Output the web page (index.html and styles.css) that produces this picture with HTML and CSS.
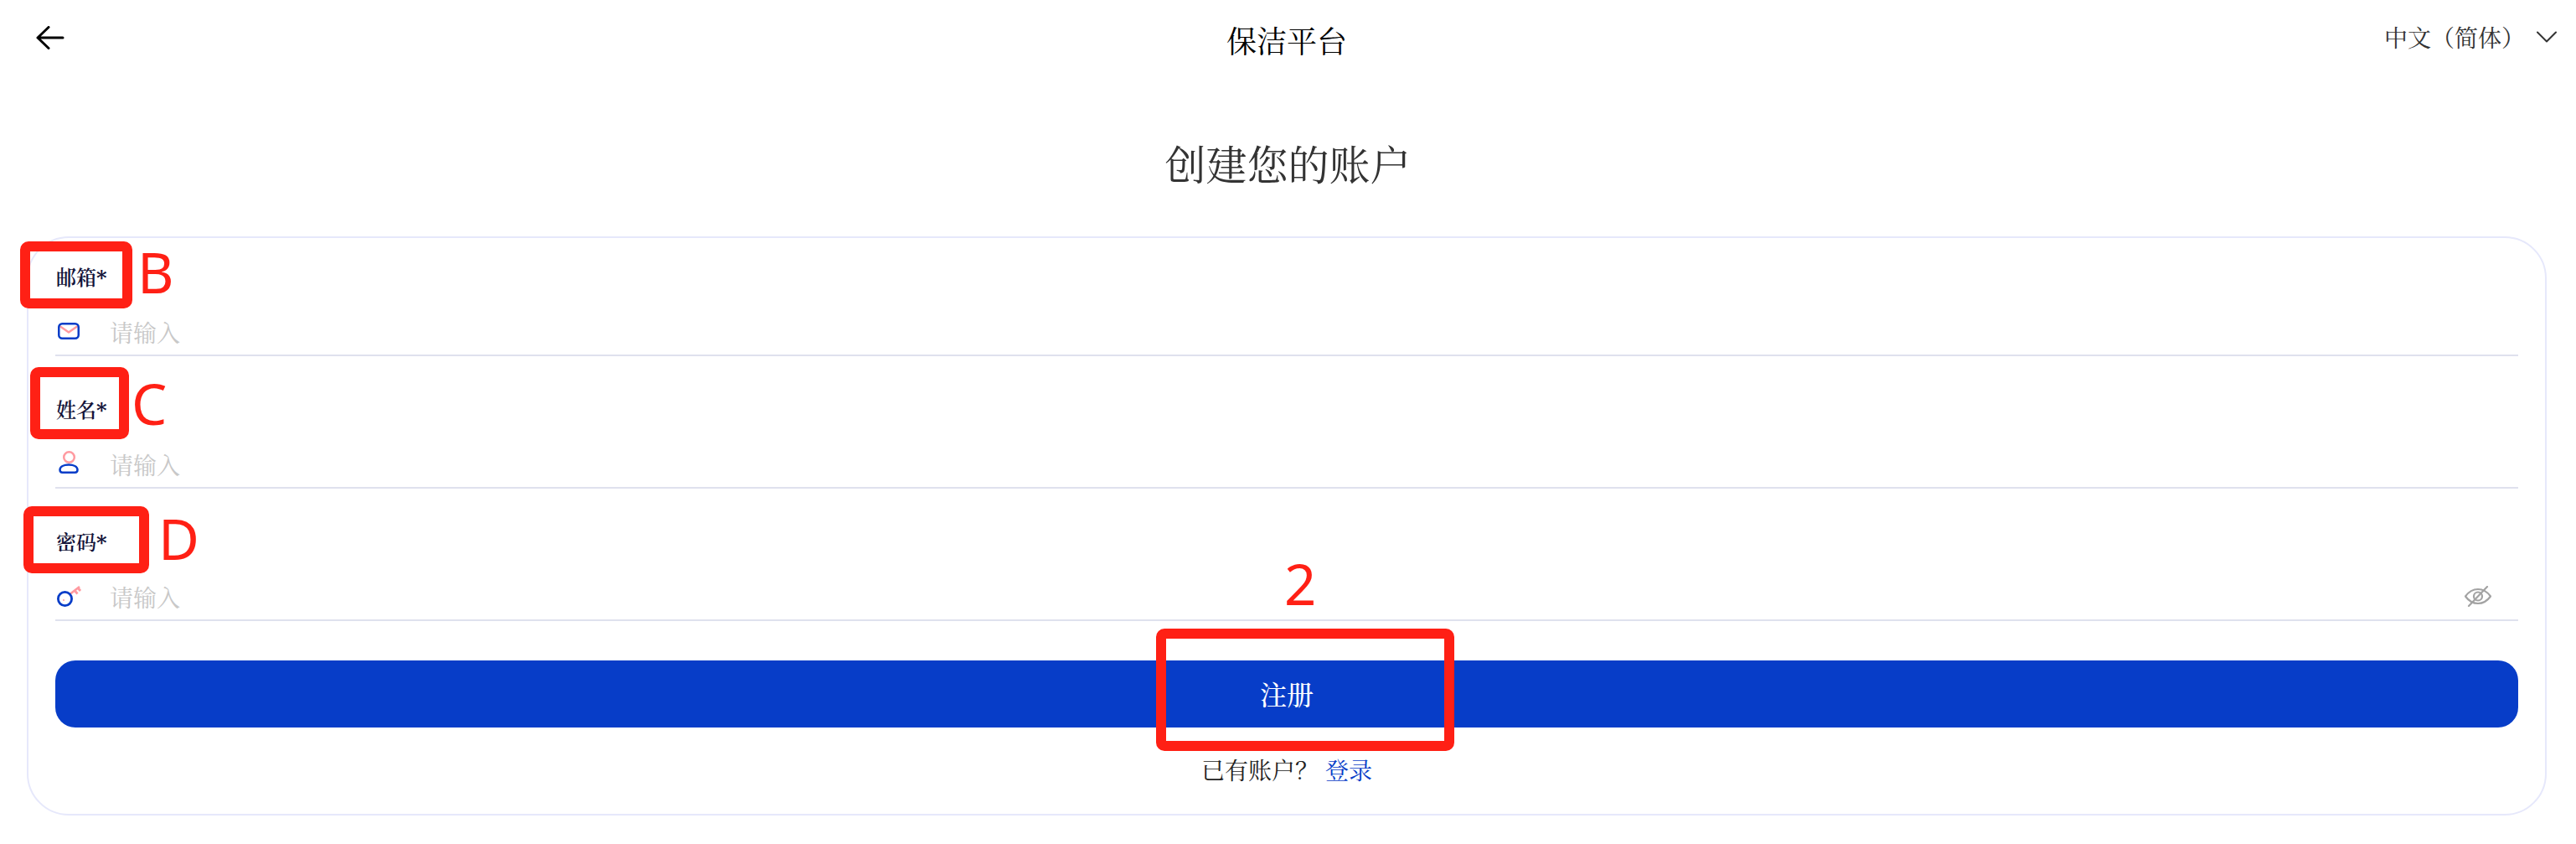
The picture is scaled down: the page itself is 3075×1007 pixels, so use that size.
FILE: index.html
```html
<!DOCTYPE html>
<html lang="zh-CN">
<head>
<meta charset="utf-8">
<title>保洁平台</title>
<link rel="stylesheet" href="styles.css">
</head>
<body>
<header class="topbar">
  <a class="back" aria-label="返回">
    <svg width="34" height="28" viewBox="0 0 34 28" fill="none" stroke="#000" stroke-width="3" stroke-linecap="round" stroke-linejoin="round"><path d="M32 14H2M15 1.500L2 14l13 12.500"/></svg>
  </a>
  <div class="brand">保洁平台</div>
  <div class="lang">
    <span>中文（简体）</span>
    <svg width="24" height="14" viewBox="0 0 24 14" fill="none" stroke="#333" stroke-width="2" stroke-linecap="round" stroke-linejoin="round"><path d="M1 1.500l11 11 11-11"/></svg>
  </div>
</header>
<h1 class="heading">创建您的账户</h1>
<main class="card">
  <form class="form">
    <div class="field">
      <label class="label">邮箱*</label>
      <div class="input">
        <svg class="icon" width="32" height="30" viewBox="0 0 32 30" fill="none"><path d="M6 8.500l10 7 10-7" stroke="#ff9aa0" stroke-width="2.500" stroke-linecap="round" stroke-linejoin="round"/><rect x="4.250" y="5.250" width="23.500" height="17.500" rx="4" stroke="#073dc8" stroke-width="2.500"/></svg>
        <span class="placeholder">请输入</span>
      </div>
    </div>
    <div class="field">
      <label class="label">姓名*</label>
      <div class="input">
        <svg class="icon" width="32" height="30" viewBox="0 0 32 30" fill="none"><circle cx="16.500" cy="6.500" r="6.300" stroke="#ff9aa0" stroke-width="2.500"/><path d="M5.500 21.500c0-4 5-6 10.500-6s10.500 2 10.500 6c0 2-1 3.200-3 3.200H8.500c-2 0-3-1.200-3-3.200z" stroke="#073dc8" stroke-width="2.500"/></svg>
        <span class="placeholder">请输入</span>
      </div>
    </div>
    <div class="field">
      <label class="label">密码*</label>
      <div class="input">
        <svg class="icon" width="32" height="30" viewBox="0 0 32 30" fill="none"><path d="M18 11.500L29 3M23 7.500l3.500 4M27 4.500l3 3.500" stroke="#ff9aa0" stroke-width="2.800"/><circle cx="11.500" cy="17.500" r="8.100" stroke="#073dc8" stroke-width="2.800"/><circle cx="10" cy="19" r="1" fill="#ff9aa0"/></svg>
        <span class="placeholder">请输入</span>
        <svg class="eye" width="32" height="26" viewBox="0 0 32 26" fill="none" stroke="#a3a3a3" stroke-width="2.200" stroke-linecap="round" stroke-linejoin="round"><path d="M1 12.500C5 7 10 4 16 4s11 3 15 8.500C27 18 22 21 16 21S5 18 1 12.500z"/><circle cx="16" cy="12.500" r="5"/><path d="M27 1L5 24"/></svg>
      </div>
    </div>
    <button class="submit" type="button">注册</button>
  </form>
  <p class="signin">已有账户？<a class="signin-link">登录</a></p>
</main>

<div class="mark mark-b"></div><span class="tag tag-b">B</span>
<div class="mark mark-c"></div><span class="tag tag-c">C</span>
<div class="mark mark-d"></div><span class="tag tag-d">D</span>
<div class="mark mark-2"></div><span class="tag tag-2">2</span>
</body>
</html>
```

FILE: styles.css
```css
* { box-sizing: border-box; }
html, body { margin: 0; padding: 0; }
body {
  position: relative;
  width: 3075px;
  height: 1007px;
  overflow: hidden;
  background: #fff;
  font-family: "Noto Serif CJK SC", "Source Han Serif SC", serif;
  color: #333;
}
.topbar {
  display: grid;
  grid-template-columns: 1fr auto 1fr;
  align-items: center;
  height: 96px;
  padding: 0 23px 0 20px;
}
.back { display: flex; margin-left: 23px; margin-top: -6px; }
.brand { font-size: 36px; line-height: 44px; color: #000; }
.lang {
  display: flex;
  align-items: center;
  justify-content: flex-end;
  gap: 14px;
  margin-top: -8px;
  font-size: 28px;
  line-height: 36px;
}
.heading {
  text-align: center;
  font-size: 49px;
  line-height: 64px;
  font-weight: 400;
  margin: 66px 0 56px;
}
.card {
  width: 3008px;
  height: 691px;
  margin-left: 32px;
  padding: 30px 32px 0;
  border: 2px solid #e6e8fb;
  border-radius: 50px;
}
.form { display: flex; flex-direction: column; gap: 47px; }
.field { display: flex; flex-direction: column; gap: 15px; }
.label {
  padding: 2px 0 0 1px;
  height: 32px;
  font-family: "DejaVu Serif", "Noto Serif CJK SC", "Source Han Serif SC", serif;
  font-size: 24px;
  line-height: 32px;
  font-weight: 600;
  color: #14143a;
}
.input {
  display: flex;
  align-items: center;
  height: 64px;
  padding-top: 8px;
  border-bottom: 2px solid #dfe1ee;
}
.icon { flex: none; margin-right: 33px; overflow: visible; }
.placeholder { font-size: 28px; line-height: 40px; color: #c8c8c8; }
.eye { margin-left: auto; margin-right: 32px; }
.submit {
  height: 80px;
  padding: 0 0 3px;
  border: 0;
  border-radius: 24px;
  background: #073dc8;
  color: #fff;
  font: inherit;
  font-size: 32px;
  font-weight: 500;
}
.signin {
  margin: 30px 0 0;
  text-align: center;
  font-size: 28px;
  line-height: 40px;
  color: #222;
}
.signin-link { color: #073dc8; margin-left: 8px; }

.mark {
  position: absolute;
  border: 12px solid #ff2015;
  border-radius: 10px;
}
.mark-b { left: 24px; top: 288px; width: 134px; height: 80px; }
.mark-c { left: 36px; top: 438px; width: 118px; height: 86px; }
.mark-d { left: 28px; top: 604px; width: 150px; height: 80px; }
.mark-2 { left: 1380px; top: 750px; width: 356px; height: 146px; }
.tag {
  position: absolute;
  font-family: "Noto Sans", sans-serif;
  font-size: 67px;
  line-height: 80px;
  color: #ff2015;
}
.tag-b { left: 164px; top: 284px; }
.tag-c { left: 157px; top: 441px; }
.tag-d { left: 189px; top: 602px; }
.tag-2 { left: 1533px; top: 656px; }
```
